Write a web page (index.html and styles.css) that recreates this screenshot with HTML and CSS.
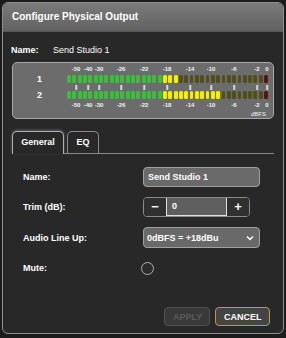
FILE: index.html
```html
<!DOCTYPE html>
<html lang="en">
<head>
    <meta charset="UTF-8">
    <meta name="viewport" content="width=device-width, initial-scale=1.0">
    <title>Configure Physical Output</title>
    <link rel="stylesheet" href="styles.css">
</head>
<body>
    <div class="dialog">
        <div class="dialog-title">Configure Physical Output</div>

        <div class="output-name">
            <span class="output-name-label">Name:</span>
            <span>Send Studio 1</span>
        </div>

        <div class="meter">
            <div></div>
            <div class="meter-scale" id="scaleTop"></div>
            <div class="meter-ch">1</div>
            <div class="meter-bar" id="bar1" data-green="18" data-yellow="3"></div>
            <div></div>
            <div class="meter-ticks" id="ticks"></div>
            <div class="meter-ch">2</div>
            <div class="meter-bar" id="bar2" data-green="18" data-yellow="11"></div>
            <div></div>
            <div class="meter-scale" id="scaleBottom"></div>
            <div class="meter-unit">dBFS</div>
        </div>

        <div class="tabs">
            <div class="tab active">General</div>
            <div class="tab">EQ</div>
        </div>

        <div class="form">
            <label>Name:</label>
            <div class="text-input">Send Studio 1</div>

            <label>Trim (dB):</label>
            <div class="stepper">
                <span class="stepper-btn">&minus;</span>
                <span class="stepper-value">0</span>
                <span class="stepper-btn">+</span>
            </div>

            <label>Audio Line Up:</label>
            <div class="select">
                <span>0dBFS = +18dBu</span>
                <svg width="8" height="6" viewBox="0 0 8 6"><path d="M1 1.5 L4 4.5 L7 1.5" fill="none" stroke="#fff" stroke-width="1.5"/></svg>
            </div>

            <label>Mute:</label>
            <div><span class="radio"></span></div>
        </div>

        <div class="footer">
            <button class="btn" disabled>APPLY</button>
            <button class="btn btn-cancel">CANCEL</button>
        </div>
    </div>

    <script>
        // scale marks: label and offset (px) from the start of the bar
        const marks = [
            ['-50', 9], ['-40', 21], ['-30', 32], ['-26', 54], ['-22', 77],
            ['-18', 100], ['-14', 123], ['-10', 144], ['-6', 167], ['-2', 190], ['0', 200]
        ];

        ['scaleTop', 'scaleBottom'].forEach(function(id) {
            const scale = document.getElementById(id);
            marks.forEach(function(m) {
                const s = document.createElement('span');
                s.textContent = m[0];
                s.style.left = m[1] + 'px';
                scale.appendChild(s);
            });
        });

        const ticks = document.getElementById('ticks');
        marks.forEach(function(m) {
            const t = document.createElement('span');
            t.style.left = m[1] + 'px';
            ticks.appendChild(t);
        });

        // 38 segments per bar, the last one is the clip led
        ['bar1', 'bar2'].forEach(function(id) {
            const bar = document.getElementById(id);
            const green = +bar.dataset.green;
            const yellow = +bar.dataset.yellow;
            for (let i = 0; i < 38; i++) {
                const seg = document.createElement('span');
                seg.className = 'seg';
                if (i === 37) seg.classList.add('clip');
                else if (i < green) seg.classList.add('green');
                else if (i < green + yellow) seg.classList.add('yellow');
                bar.appendChild(seg);
            }
        });
    </script>
</body>
</html>
```

FILE: styles.css
```css
* {
    margin: 0;
    padding: 0;
    box-sizing: border-box;
}

body {
    font-family: 'Liberation Sans', Arial, sans-serif;
    background-color: #1c1c1c;
    color: #fff;
    width: 286px;
    height: 338px;
    overflow: hidden;
}

.dialog {
    margin: 2px;
    width: 282px;
    height: 332px;
    border: 1px solid #8e8e8e;
    border-radius: 6px;
    background: #282828;
    overflow: hidden;
    display: flex;
    flex-direction: column;
}

.dialog-title {
    height: 29px;
    line-height: 28px;
    padding-left: 9px;
    font-size: 10px;
    font-weight: bold;
    background: linear-gradient(#7a7a7a, #626262);
    border-bottom: 1px solid #555;
}

.output-name {
    display: flex;
    font-size: 9px;
    padding: 13px 0 0 8px;
    height: 30px;
}

.output-name-label {
    font-weight: bold;
    width: 42px;
}

/* level meter */
.meter {
    margin: 0 9px;
    height: 57px;
    border: 1px solid #a8a8a8;
    border-radius: 5px;
    background: #6c6c6c;
    display: grid;
    grid-template-columns: 54px 201px;
    grid-template-rows: 12px 8px 8px 8px 12px 7px;
}

.meter-ch {
    font-size: 9px;
    font-weight: bold;
    line-height: 8px;
    padding-left: 24px;
}

.meter-scale,
.meter-ticks {
    position: relative;
}

.meter-scale span {
    position: absolute;
    top: 3px;
    transform: translateX(-50%);
    font-size: 6px;
    font-weight: bold;
    line-height: 6px;
    color: #f2f2f2;
}

.meter-ticks span {
    position: absolute;
    top: 2px;
    width: 1.5px;
    height: 5px;
    background: #d6d6d6;
    transform: translateX(-50%);
}

.meter-bar {
    display: flex;
    gap: 1.4px;
}

.seg {
    flex: 1;
    border-radius: 1.5px;
    background: #4f4f1d;
}

.seg.green {
    background: #38c03a;
}

.seg.yellow {
    background: #f6ee00;
}

.seg.clip {
    background: #5a1212;
}

.meter-unit {
    grid-column: 1 / 3;
    text-align: right;
    font-size: 6px;
    line-height: 6px;
    padding-right: 2px;
    color: #f2f2f2;
}

/* tabs */
.tabs {
    display: flex;
    gap: 3px;
    margin: 12px 9px 0;
    border-bottom: 1px solid #8a8a8a;
}

.tab {
    height: 22px;
    line-height: 21px;
    font-size: 9px;
    font-weight: bold;
    text-align: center;
    border: 1px solid #8a8a8a;
    border-bottom: none;
    border-radius: 5px 5px 0 0;
    width: 32px;
}

.tab.active {
    width: 52px;
    margin-bottom: -1px;
    height: 23px;
    border-color: #b0b0b0;
    background: #282828;
    box-shadow: 0 -1px 3px rgba(255, 255, 255, 0.25);
}

/* form */
.form {
    display: grid;
    grid-template-columns: 120px 117px;
    row-gap: 10px;
    align-items: center;
    padding: 13px 0 0 20px;
}

.form label {
    font-size: 9px;
    font-weight: bold;
}

.text-input {
    height: 20px;
    line-height: 18px;
    padding-left: 4px;
    font-size: 9px;
    font-weight: bold;
    background: #6a6a6a;
    border: 1px solid #a0a0a0;
    border-radius: 4px;
}

.stepper {
    display: flex;
    width: 107px;
    height: 20px;
    border: 1px solid #8a8a8a;
    border-radius: 4px;
    overflow: hidden;
    font-size: 9px;
    font-weight: bold;
}

.stepper-btn {
    width: 22px;
    text-align: center;
    line-height: 18px;
    font-size: 13px;
    background: #303030;
}

.stepper-value {
    flex: 1;
    line-height: 17px;
    padding-left: 5px;
    background: #5f5f5f;
    border: 1px solid #e0e0e0;
    border-top: none;
}

.select {
    display: flex;
    justify-content: space-between;
    align-items: center;
    height: 21px;
    padding: 0 5px 0 3px;
    font-size: 9px;
    font-weight: bold;
    background: #696969;
    border: 1px solid #a0a0a0;
    border-radius: 4px;
}

.radio {
    display: block;
    width: 13px;
    height: 13px;
    margin: 4px 0 3px -2px;
    border: 1.5px solid #b0b0b0;
    border-radius: 50%;
    background: #2c2c2c;
}

/* buttons */
.footer {
    margin-top: auto;
    display: flex;
    justify-content: flex-end;
    gap: 5px;
    padding: 0 13px 7px 0;
}

.btn {
    height: 19px;
    padding: 0 8px;
    font-family: inherit;
    font-size: 9px;
    font-weight: bold;
    color: #fff;
    background: #444;
    border: 1px solid #c8933c;
    border-radius: 4px;
}

.btn:disabled {
    width: 46px;
    color: #5a5a5a;
    background: #393939;
    border-color: #505050;
}

.btn-cancel {
    width: 55px;
}
```
